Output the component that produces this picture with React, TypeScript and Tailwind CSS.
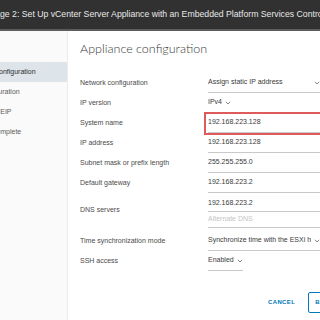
import React from "react";

const STEPS = [
  { n: 1, label: "Introduction" },
  { n: 2, label: "Appliance configuration", active: true },
  { n: 3, label: "SSO configuration" },
  { n: 4, label: "Configure CEIP" },
  { n: 5, label: "Ready to complete" },
];

const Chevron: React.FC = () => (
  <svg width="6" height="4" viewBox="0 0 6 4" className="ml-[3px] shrink-0">
    <path d="M0.8 0.8 L3 3 L5.2 0.8" fill="none" stroke="#666" strokeWidth="0.8" />
  </svg>
);

const Row: React.FC<{ label: string; children: React.ReactNode }> = ({ label, children }) => (
  <div className="flex items-stretch">
    <div className="w-[128px] shrink-0 flex items-center text-[7px] text-[#4a4a4a]">{label}</div>
    {children}
  </div>
);

const Field: React.FC<{ value: string; full?: boolean; select?: boolean; placeholder?: boolean; h?: string }> = ({
  value,
  full = true,
  select,
  placeholder,
  h = "h-[20px]",
}) => (
  <div
    className={`${h} flex items-center border-b border-[#c9c9c9] text-[7px] ${
      placeholder ? "text-[#c4c4c4]" : "text-[#3a3a3a]"
    } ${full ? "w-[112px] justify-between" : ""}`}
  >
    <span className="whitespace-nowrap overflow-hidden">{value}</span>
    {select && <Chevron />}
  </div>
);

export default function App() {
  return (
    <div className="w-[320px] h-[320px] overflow-hidden flex flex-col bg-white font-['Liberation_Sans',sans-serif]">
      <div className="h-[31px] shrink-0 bg-[#313131] border-b-2 border-[#5c5c5c] flex items-center overflow-hidden">
        <span className="whitespace-nowrap -ml-[13px] text-[8.7px] text-[#e8e8e8]">
          Stage 2: Set Up vCenter Server Appliance with an Embedded Platform Services Controller
        </span>
      </div>
      <div className="flex flex-1 min-h-0">
        <div className="w-[68px] shrink-0 bg-[#fafafa] border-r border-[#ececec] pt-[11px] overflow-hidden">
          {STEPS.map((s) => (
            <div
              key={s.n}
              className={`h-[20px] flex items-center ${s.active ? "bg-[#dde4ea] text-[#2e2e2e]" : "text-[#5a5a5a]"}`}
            >
              <span className="whitespace-nowrap -ml-[43px] text-[7px]">
                {s.n}&nbsp;{s.label}
              </span>
            </div>
          ))}
        </div>
        <div className="flex-1 pl-[12px] pt-[10px] overflow-hidden">
          <h1 className="text-[12.5px] leading-[16px] font-light text-[#3a3a3a] whitespace-nowrap font-['Lato',sans-serif]">
            Appliance configuration
          </h1>
          <div className="mt-[16px] w-[260px]">
            <Row label="Network configuration">
              <Field value="Assign static IP address" select />
            </Row>
            <Row label="IP version">
              <Field value="IPv4" full={false} select />
            </Row>
            <Row label="System name">
              <div className="relative">
                <Field value="192.168.223.128" />
                <div className="absolute -left-[4px] -top-[1px] -bottom-[2px] w-[130px] border-2 border-[#df5a5a]" />
              </div>
            </Row>
            <Row label="IP address">
              <Field value="192.168.223.128" />
            </Row>
            <Row label="Subnet mask or prefix length">
              <Field value="255.255.255.0" />
            </Row>
            <Row label="Default gateway">
              <Field value="192.168.223.2" />
            </Row>
            <Row label="DNS servers">
              <div className="pt-[3px]">
                <Field value="192.168.223.2" h="h-[16px]" />
                <Field value="Alternate DNS" placeholder h="h-[16px]" />
              </div>
            </Row>
            <div className="h-[3px]" />
            <Row label="Time synchronization mode">
              <Field value="Synchronize time with the ESXi host" select />
            </Row>
            <Row label="SSH access">
              <Field value="Enabled" full={false} select />
            </Row>
            <div className="flex items-center mt-[21px] pl-[188px] gap-[13px]">
              <span className="text-[6px] font-bold tracking-[0.06em] text-[#0079b8]">CANCEL</span>
              <span className="h-[21px] px-[6px] flex items-center border border-[#0079b8] rounded-[2px] text-[6px] font-bold tracking-[0.06em] text-[#0079b8]">
                BACK
              </span>
            </div>
          </div>
        </div>
      </div>
    </div>
  );
}
